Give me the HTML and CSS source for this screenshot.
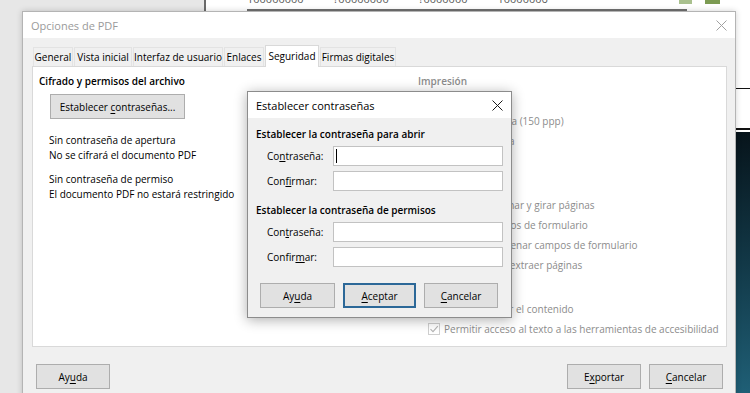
FILE: index.html
```html
<!DOCTYPE html>
<html lang="es">
<head>
<meta charset="utf-8">
<title>Opciones de PDF</title>
<link rel="stylesheet" href="styles.css">
</head>
<body>
<div class="screen">
  <div class="sheet">
    <div class="nums"><span>100000000</span><span>?00000000</span><span>?0000000</span><span>10000006</span></div>
    <div class="sheet-bar"></div>
    <div class="greens"><span class="g1"></span><span class="g2"></span></div>
  </div>
  <div class="side">
    <div class="side-top"></div>
    <div class="side-mid"></div>
    <div class="side-img"></div>
  </div>

  <div class="win main-win">
    <div class="titlebar">
      <span class="title inactive">Opciones de PDF</span>
      <svg class="xbtn" width="11" height="11" viewBox="0 0 11 11"><path d="M0.5 0.5 L10.5 10.5 M10.5 0.5 L0.5 10.5" stroke="#a0a0a0" stroke-width="1" fill="none"/></svg>
    </div>
    <div class="main-body">
      <div class="tabs">
        <span class="tab t-general">General</span>
        <span class="tab t-vista">Vista inicial</span>
        <span class="tab t-interfaz">Interfaz de usuario</span>
        <span class="tab t-enlaces">Enlaces</span>
        <span class="tab t-seg active">Seguridad</span>
        <span class="tab t-firmas">Firmas digitales</span>
      </div>
      <div class="panel">
        <div class="col-left">
          <div class="heading">Cifrado y permisos del archivo</div>
          <button class="btn btn-set">Establecer <u>c</u>ontraseñas...</button>
          <p class="info">Sin contraseña de apertura<br>No se cifrará el documento PDF</p>
          <p class="info second">Sin contraseña de permiso<br>El documento PDF no estará restringido</p>
        </div>
        <div class="col-right">
          <div class="heading dim">Impresión</div>
          <div class="opt"><span class="radio"></span>No se permite</div>
          <div class="opt"><span class="radio"></span>Resolución baja (150 ppp)</div>
          <div class="opt"><span class="radio"></span>Resolución alta</div>
          <div class="heading dim sect">Cambios</div>
          <div class="opt"><span class="radio"></span>No se permite</div>
          <div class="opt"><span class="radio"></span>Insertar, eliminar y girar páginas</div>
          <div class="opt"><span class="radio"></span>Rellenar campos de formulario</div>
          <div class="opt"><span class="radio"></span>Comentar, rellenar campos de formulario</div>
          <div class="opt"><span class="radio"></span>Todo excepto extraer páginas</div>
          <div class="heading dim sect">Contenido</div>
          <div class="opt"><span class="check"><svg width="12" height="12" viewBox="0 0 12 12"><path d="M2.5 6.2 L5 8.7 L9.8 3.2" stroke="#b4b4b4" stroke-width="1.1" fill="none"/></svg></span>Permitir copiar el contenido</div>
          <div class="opt"><span class="check"><svg width="12" height="12" viewBox="0 0 12 12"><path d="M2.5 6.2 L5 8.7 L9.8 3.2" stroke="#b4b4b4" stroke-width="1.1" fill="none"/></svg></span>Permitir acceso al texto a las herramientas de accesibilidad</div>
        </div>
      </div>
      <div class="footer">
        <button class="btn">Ay<u>u</u>da</button>
        <span class="spacer"></span>
        <button class="btn">E<u>x</u>portar</button>
        <button class="btn"><u>C</u>ancelar</button>
      </div>
    </div>
  </div>

  <div class="win sub-win">
    <div class="titlebar">
      <span class="title">Establecer contraseñas</span>
      <svg class="xbtn" width="11" height="11" viewBox="0 0 11 11"><path d="M0.5 0.5 L10.5 10.5 M10.5 0.5 L0.5 10.5" stroke="#1a1a1a" stroke-width="1" fill="none"/></svg>
    </div>
    <div class="sub-body">
      <div class="heading h1">Establecer la contraseña para abrir</div>
      <div class="field"><label>Co<u>n</u>traseña:</label><span class="input"><span class="caret"></span></span></div>
      <div class="field"><label>Con<u>f</u>irmar:</label><span class="input"></span></div>
      <div class="heading h2">Establecer la contraseña de permisos</div>
      <div class="field"><label>Con<u>t</u>raseña:</label><span class="input"></span></div>
      <div class="field"><label>Confir<u>m</u>ar:</label><span class="input"></span></div>
      <div class="sub-buttons">
        <button class="btn b-ayuda">Ay<u>u</u>da</button>
        <button class="btn b-ok"><u>A</u>ceptar</button>
        <button class="btn b-cancel"><u>C</u>ancelar</button>
      </div>
    </div>
  </div>
</div>
</body>
</html>
```
FILE: styles.css
```css
* { box-sizing: border-box; margin: 0; padding: 0; }
html, body { width: 750px; height: 393px; overflow: hidden; }
body {
  background: #e7e7e7;
  font-family: "Open Sans", "Noto Sans", sans-serif;
  font-size: 10px;
  color: #000;
}
.screen { position: relative; width: 750px; height: 393px; overflow: hidden; }

/* background windows */
.sheet {
  position: absolute; left: 204px; top: 0; width: 546px; height: 393px;
  background: #fff; border-left: 2px solid #6a6a6a;
}
.nums {
  position: absolute; left: 41px; top: -9px;
  display: flex; gap: 30px; color: #5a5a5a; font-size: 11px;
}
.sheet-bar { position: absolute; left: 41px; top: 9px; width: 440px; height: 2px; background: #707070; }
.greens { position: absolute; left: 473px; top: 0; display: flex; gap: 13px; }
.greens span { display: block; height: 4px; }
.g1 { width: 13px; background: #a9c08e; }
.g2 { width: 15px; background: #7c9b52; }

.side {
  position: absolute; left: 736px; top: 0; width: 14px; height: 393px;
  display: flex; flex-direction: column; background: #fff;
}
.side-top { height: 89px; border-bottom: 1px solid #111; }
.side-mid { height: 41px; border-bottom: 2px solid #111; }
.side-img { flex: 1; margin-top: 2px; background: linear-gradient(#07141b, #123847 50%, #1f5f76); }

/* windows */
.win { position: absolute; display: flex; flex-direction: column; background: #f0f0f0; }
.main-win {
  left: 22px; top: 11px; width: 714px; height: 400px;
  border: 1px solid #b4b4b4;
  box-shadow: 0 0 6px rgba(0,0,0,0.18);
}
.titlebar {
  height: 26px; background: #fff; flex: none;
  display: flex; align-items: center; justify-content: space-between;
  padding: 0 8px 0 8px; font-size: 11px;
}
.title.inactive { color: #9a9a9a; }

.main-body { padding: 7px 8px 0 9px; display: flex; flex-direction: column; }
.tabs { display: flex; align-items: flex-end; padding-left: 1px; height: 21px; }
.tab {
  height: 19px; line-height: 18px; text-align: center;
  border: 1px solid #e3e3e3; border-bottom: none; margin-right: 1px;
  background: #f0f0f0; white-space: nowrap;
}
.t-general { width: 40px; }
.t-vista { width: 58px; }
.t-interfaz { width: 90px; }
.t-enlaces { width: 40px; }
.t-seg { width: 54px; }
.t-firmas { width: 76px; }
.tab.active {
  height: 22px; line-height: 20px; background: #fff; border-color: #d9d9d9;
  margin-bottom: -1px; position: relative; z-index: 1;
}
.panel {
  height: 281px; background: #fff; border: 1px solid #d9d9d9;
  display: flex; padding: 7px 6px 0 6px;
}
.heading { font-weight: 600; line-height: 15px; white-space: nowrap; }
.dim { color: #8c8c8c; }
.col-left { width: 379px; flex: none; }
.btn {
  font: inherit; color: #000; background: #e1e1e1; border: 1px solid #adadad;
  height: 25px; width: 74px; text-align: center;
}
.btn u { text-decoration-thickness: 1px; text-underline-offset: 2px; }
.btn-set { width: 135px; margin: 5px 0 0 11px; display: block; }
.info { margin: 14px 0 0 10px; line-height: 15px; }
.info.second { margin-top: 9px; }

.col-right { color: #8c8c8c; }
.opt { height: 20px; display: flex; align-items: center; padding-left: 10px; white-space: nowrap; }
.heading.sect { margin-top: 4px; height: 20px; line-height: 20px; }
.col-right > .heading:first-child { margin-bottom: 2px; }
.radio {
  width: 12px; height: 12px; border: 1px solid #c8c8c8; border-radius: 50%;
  margin-right: 4px; background: #fff; flex: none;
}
.check {
  width: 12px; height: 12px; border: 1px solid #cfcfcf; margin-right: 4px;
  background: #fff; flex: none; display: flex;
}
.check svg { margin: -1px; }

.footer { display: flex; gap: 8px; margin-top: 17px; padding: 0 4px; }
.spacer { flex: 1; }

/* sub dialog */
.sub-win {
  left: 247px; top: 91px; width: 265px; height: 227px;
  border: 1px solid #8c8c8c;
  box-shadow: 0 2px 12px rgba(0,0,0,0.32);
}
.sub-body { padding: 9px 8px 0 8px; }
.sub-body .heading { font-weight: 650; }
.h2 { margin-top: 12px; }
.field { display: flex; align-items: center; margin-top: 5px; }
.h1 + .field, .h2 + .field { margin-top: 4px; }
.field label { width: 77px; padding-left: 11px; flex: none; white-space: nowrap; }
.input {
  width: 170px; height: 20px; background: #fff; border: 1px solid #c2c2c2;
  display: flex; align-items: center; padding-left: 2px;
}
.caret { width: 1px; height: 14px; background: #000; }
.sub-buttons { display: flex; gap: 8px; margin: 16px 0 0 4px; }
.b-ayuda { width: 75px; }
.b-ok { width: 73px; border: 2px solid #2c6898; }
.b-cancel { width: 74px; }
```
